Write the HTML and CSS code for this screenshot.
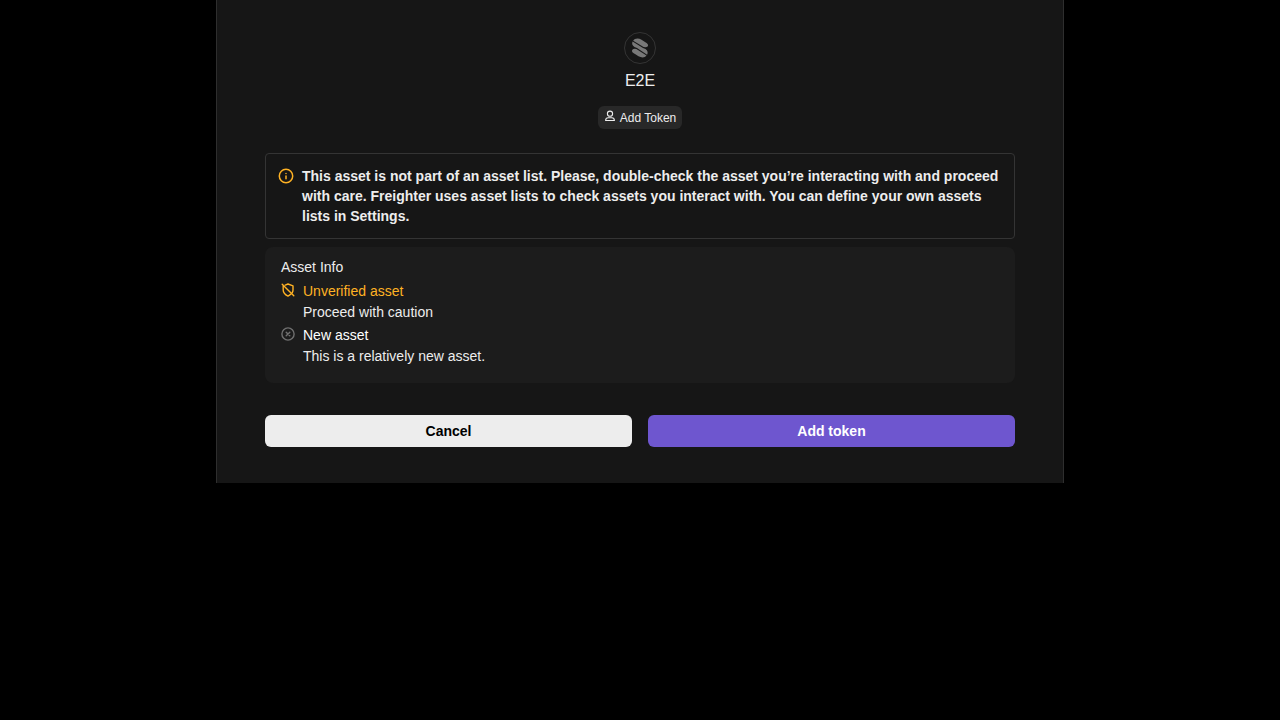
FILE: index.html
```html
<!DOCTYPE html>
<html lang="en">
<head>
<meta charset="utf-8">
<meta name="viewport" content="width=device-width, initial-scale=1">
<title>Add Token</title>
<link rel="stylesheet" href="styles.css">
</head>
<body>
<main class="panel">
  <header class="asset">
    <div class="asset-logo">
      <svg width="18" height="20" viewBox="-1 -.5 18 20" fill="currentColor" aria-hidden="true">
        <path d="M1.2 2.2C2.5-.2 6.5-.5 9.5 1.2L14.6 4.4C16.8 6 16.4 8.4 13.6 8.7L11.6 8.6Z"/>
        <path d="M.6 3.1 11 9.5 13.5 10.4C15.8 11.8 16.2 14.2 15.1 16.2L5 9.5 2.5 8.5C.2 7.2-.4 5.2.6 3.1Z"/>
        <path d="M4.4 10.4 2.5 10.2C-.4 10.5-.8 13.1 1.4 14.6L6.5 17.8C9.5 19.5 13 19.3 14.5 17.1Z"/>
      </svg>
    </div>
    <h1 class="asset-code">E2E</h1>
    <div class="action-tag">
      <svg width="12" height="12" viewBox="0 0 12 12" fill="none" stroke="currentColor" stroke-width="1.1" stroke-linejoin="round" aria-hidden="true">
        <circle cx="6" cy="3.7" r="2.6"/>
        <path d="M1.6 10.5C1.6 8.7 2.7 7.7 4.3 7.7H7.7C9.3 7.7 10.4 8.7 10.4 10.5Z"/>
      </svg>
      <span>Add Token</span>
    </div>
  </header>

  <section class="notice">
    <svg class="notice-icon" width="16" height="16" viewBox="0 0 16 16" fill="none" stroke="currentColor" stroke-width="1.5" stroke-linecap="round" aria-hidden="true">
      <circle cx="8" cy="8" r="6.7"/>
      <path d="M8 10.7V8M8 5.4V5.4"/>
    </svg>
    <p class="notice-text">This asset is not part of an asset list. Please, double-check the asset you’re interacting with and proceed with care. Freighter uses asset lists to check assets you interact with. You can define your own assets lists in Settings.</p>
  </section>

  <section class="info">
    <h2 class="info-title">Asset Info</h2>
    <ul class="info-list">
      <li class="info-item">
        <svg class="info-icon warning" width="14" height="14" viewBox="0 0 14 14" fill="none" stroke="currentColor" stroke-width="1.4" stroke-linecap="round" stroke-linejoin="round" aria-hidden="true">
          <path d="M4.2 2.1 7 1 12 2.8V7C12 8 11.7 8.8 11.3 9.6M2.2 2.8V7C2.2 10 4.7 12 7 13.1 8.1 12.6 9.1 11.9 10 11.1M1.2 1.2 12.8 12.8"/>
        </svg>
        <div>
          <h3 class="info-name warning">Unverified asset</h3>
          <p class="info-detail">Proceed with caution</p>
        </div>
      </li>
      <li class="info-item">
        <svg class="info-icon muted" width="14" height="14" viewBox="0 0 14 14" fill="none" stroke="currentColor" stroke-width="1.4" stroke-linecap="round" aria-hidden="true">
          <circle cx="7" cy="7" r="6.1"/>
          <path d="M5.2 5.2L8.8 8.8M8.8 5.2L5.2 8.8"/>
        </svg>
        <div>
          <h3 class="info-name">New asset</h3>
          <p class="info-detail">This is a relatively new asset.</p>
        </div>
      </li>
    </ul>
  </section>

  <div class="actions">
    <button type="button" class="button cancel">Cancel</button>
    <button type="button" class="button confirm">Add token</button>
  </div>
</main>
</body>
</html>
```
FILE: styles.css
```css
* {
  box-sizing: border-box;
}

body,
h1,
h2,
h3,
p,
ul {
  margin: 0;
  padding: 0;
}

body {
  background: #000;
  color: #ededed;
  font: 14px/20px "Liberation Sans", Helvetica, Arial, sans-serif;
}

h1,
h2,
h3 {
  font-size: 14px;
  font-weight: 400;
}

svg {
  display: block;
  flex-shrink: 0;
}

.panel {
  max-width: 848px;
  margin: 0 auto;
  padding: 32px 48px 36px;
  border: solid #2e2e2e;
  border-width: 0 1px;
  background: #161616;
}

.asset {
  display: flex;
  flex-direction: column;
  align-items: center;
  margin-bottom: 24px;
}

.asset-logo {
  display: grid;
  place-items: center;
  width: 32px;
  height: 32px;
  border: 1px solid #343434;
  border-radius: 50%;
  color: #787878;
}

.asset-code {
  margin: 5px 0 13px;
  font-size: 16px;
  line-height: 24px;
}

.action-tag {
  display: flex;
  gap: 4px;
  padding: 3px 6px 2px;
  border-radius: 6px;
  background: #282828;
  font-size: 12px;
  line-height: 18px;
}

.action-tag svg {
  margin-top: 1px;
}

.notice {
  display: flex;
  gap: 8px;
  margin-bottom: 8px;
  padding: 12px;
  border: 1px solid #343434;
  border-radius: 4px;
}

.notice-icon {
  margin-top: 2px;
  color: #ffb224;
}

.notice-text {
  font-weight: 700;
}

.info {
  padding: 10px 16px 16px;
  border-radius: 8px;
  background: #1c1c1c;
}

.info-title {
  margin-bottom: 4px;
}

.info-list {
  display: grid;
  gap: 2px;
  list-style: none;
}

.info-item {
  display: flex;
  gap: 8px;
}

.info-icon {
  margin-top: 2px;
}

.info-name {
  line-height: 21px;
  color: #fff;
}

.info-detail {
  line-height: 21px;
}

.warning {
  color: #ffb224;
}

.muted {
  color: #707070;
}

.actions {
  display: grid;
  grid-template-columns: 1fr 1fr;
  gap: 16px;
  margin-top: 32px;
}

.button {
  height: 32px;
  padding: 0 12px;
  border: 0;
  border-radius: 6px;
  font: inherit;
  font-weight: 700;
  cursor: pointer;
}

.cancel {
  background: #ededed;
  color: #000;
}

.confirm {
  background: #6e56cf;
  color: #fff;
}
```
